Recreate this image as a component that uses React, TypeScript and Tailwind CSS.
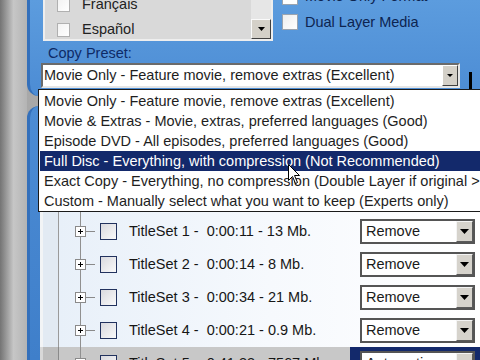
import React from "react";

function Tri({ w = 8, h = 4 }: { w?: number; h?: number }) {
  return (
    <svg width={w} height={h} viewBox={`0 0 ${w} ${h}`}>
      <path d={`M0 0H${w}L${w / 2} ${h}Z`} fill="#000" />
    </svg>
  );
}

function PlusBox() {
  return (
    <svg width="11" height="11" viewBox="0 0 11 11">
      <rect x="0.5" y="0.5" width="10" height="10" fill="#fff" stroke="#8a8a8a" />
      <path d="M3 5.5H8M5.5 3V8" stroke="#000" strokeWidth="1" />
    </svg>
  );
}

function RemoveCombo({ label }: { label: string }) {
  return (
    <div className="w-[115px] h-[25px] bg-white border-2 border-[#555555] flex items-center">
      <span className="flex-1 pl-[4px] text-[14.5px] leading-none text-[#1a1a1a] whitespace-nowrap overflow-hidden">
        {label}
      </span>
      <div className="w-[17px] h-[21px] bg-[#d6d3cc] border border-t-[#f4f4f4] border-l-[#f4f4f4] border-b-[#5a5a5a] border-r-[#5a5a5a] flex items-center justify-center">
        <Tri w={9} h={5} />
      </div>
    </div>
  );
}

function TreeRow({
  text,
  combo,
  selected = false,
}: {
  text: string;
  combo: string;
  selected?: boolean;
}) {
  return (
    <div className="h-[33px] flex shrink-0">
      <div
        className={
          selected
            ? "w-[19px] shrink-0 border-l-[3px] border-l-[#d8d8d8] bg-[#bdbdbd] border-r border-r-[#8a8a8a]"
            : "w-[19px] shrink-0 border-l-[3px] border-l-[#f2f4f6] bg-[#e2eaf3] border-r border-r-[#9a9a9a]"
        }
      />
      <div
        className={
          selected
            ? "flex-1 flex items-center bg-[#c8c8c8]"
            : "flex-1 flex items-center bg-linear-to-r from-[#e8f0f9] via-[#f6f9fd] to-white"
        }
      >
        <div className="ml-[16px] w-[11px] h-full flex items-center justify-center bg-[linear-gradient(to_right,transparent_5px,#909090_5px,#909090_6px,transparent_6px)]">
          <PlusBox />
        </div>
        <div className="w-[9px] h-px bg-[#8a8a8a]" />
        <div className="ml-[5px] w-[17px] h-[17px] border-[1.5px] border-[#22325e] bg-linear-to-br from-[#d9d9de] to-[#fafafa]" />
        <span className="ml-[12px] w-[221px] text-[14.5px] leading-none text-[#161616] whitespace-pre">
          {text}
        </span>
        <div
          className={
            selected
              ? "flex-1 h-full bg-[#13296b] pl-[10px] flex items-center"
              : "flex-1 h-full pl-[10px] flex items-center"
          }
        >
          <RemoveCombo label={combo} />
        </div>
      </div>
    </div>
  );
}

const presets = [
  "Movie Only - Feature movie, remove extras (Excellent)",
  "Movie & Extras - Movie, extras, preferred languages (Good)",
  "Episode DVD - All episodes, preferred languages (Good)",
  "Full Disc - Everything, with compression (Not Recommended)",
  "Exact Copy - Everything, no compression (Double Layer if original > 4.7 GB)",
  "Custom - Manually select what you want to keep (Experts only)",
];

export default function App() {
  return (
    <div className="relative w-[480px] h-[360px] overflow-hidden flex font-['Liberation_Sans',Arial,sans-serif] bg-[#c2c2c2]">
      {/* left desktop strip */}
      <div className="w-[27px] shrink-0 bg-linear-to-r from-[#747474] via-[#c6c6c6] to-[#b4b4b4]" />

      {/* main column */}
      <div className="flex-1 flex flex-col bg-linear-to-r from-[#a8a8a8] to-[#c8c8c8]">
        {/* panel 1 */}
        <div className="h-[96px] shrink-0 rounded-bl-[12px] border-l-[3px] border-l-[#3470bb] bg-linear-to-b from-[#5c9cde] to-[#4c8cd4] flex flex-col">
          <div className="flex h-[41px] shrink-0">
            {/* language list */}
            <div className="ml-[13px] w-[230px] h-[41px] bg-[#d9d9d9] border-l-2 border-r-2 border-b-2 border-[#eeeeee] flex overflow-hidden">
              <div className="flex-1 flex flex-col -mt-[8px]">
                <div className="h-[25px] shrink-0 flex items-center pl-[12px]">
                  <div className="w-[13px] h-[14px] border border-[#b0b0b0] bg-linear-to-br from-[#f2f2f2] to-white" />
                  <span className="ml-[12px] text-[14.5px] leading-none text-[#222]">Français</span>
                </div>
                <div className="h-[25px] shrink-0 flex items-center pl-[12px]">
                  <div className="w-[13px] h-[14px] border border-[#b0b0b0] bg-linear-to-br from-[#f2f2f2] to-white" />
                  <span className="ml-[12px] text-[14.5px] leading-none text-[#222]">Español</span>
                </div>
              </div>
              <div className="w-[20px] shrink-0 bg-[#e6e6e6] flex flex-col justify-end">
                <div className="h-[20px] bg-[#d4d0c8] border border-t-[#fafafa] border-l-[#fafafa] border-b-[#404040] border-r-[#404040] flex items-center justify-center">
                  <Tri w={7} h={4} />
                </div>
              </div>
            </div>
            {/* right options */}
            <div className="ml-[9px] -mt-[17px] flex flex-col">
              <div className="h-[27px] flex items-center">
                <div className="w-[16px] h-[16px] border border-[#9aa4b0] bg-white" />
                <span className="ml-[7px] text-[14.5px] leading-none text-[#0d2450]">Movie Only Format</span>
              </div>
              <div className="h-[24px] flex items-center">
                <div className="w-[16px] h-[16px] border border-[#9aa4b0] bg-linear-to-br from-[#eeeeee] to-white" />
                <span className="ml-[7px] text-[14.5px] leading-none text-[#0d2450]">Dual Layer Media</span>
              </div>
            </div>
          </div>
          <div className="ml-[18px] mt-[4px] h-[16px] flex items-center text-[14.5px] leading-none text-[#0e2a66]">
            Copy Preset:
          </div>
          <div className="ml-[11px] mt-[2px] flex items-start">
            <div className="w-[419px] h-[25px] bg-white border-2 border-t-[#6b6b6b] border-l-[#6b6b6b] border-b-[#e6e6e6] border-r-[#e6e6e6] flex items-center">
              <span className="flex-1 pl-px text-[14.5px] leading-none text-[#1e1e1e] whitespace-nowrap">
                Movie Only - Feature movie, remove extras (Excellent)
              </span>
              <div className="w-[16px] h-[21px] bg-[#d4d0c8] border border-t-white border-l-white border-b-[#404040] border-r-[#404040] flex items-center justify-center">
                <Tri w={6} h={3} />
              </div>
            </div>
            <div className="ml-[9px] mt-[9px] w-[3px] h-[18px] bg-black" />
          </div>
        </div>

        {/* gap */}
        <div className="h-[10px] shrink-0" />

        {/* panel 2 */}
        <div className="flex-1 rounded-tl-[12px] border-l-[3px] border-l-[#3470bb] bg-linear-to-b from-[#4c8cd4] to-[#3f7fca] pl-[10px] flex flex-col overflow-hidden">
          <div className="mt-[105px] flex flex-col">
            <div className="h-[4px] flex shrink-0">
              <div className="w-[19px] shrink-0 border-l-[3px] border-l-[#f2f4f6] bg-[#e2eaf3] border-r border-r-[#9a9a9a]" />
              <div className="flex-1 flex bg-linear-to-r from-[#e8f0f9] via-[#f6f9fd] to-white">
                <div className="ml-[21px] w-px h-full bg-[#909090]" />
              </div>
            </div>
            <TreeRow text="TitleSet 1 -  0:00:11 - 13 Mb." combo="Remove" />
            <TreeRow text="TitleSet 2 -  0:00:14 - 8 Mb." combo="Remove" />
            <TreeRow text="TitleSet 3 -  0:00:34 - 21 Mb." combo="Remove" />
            <TreeRow text="TitleSet 4 -  0:00:21 - 0.9 Mb." combo="Remove" />
            <TreeRow text="TitleSet 5 -  0:41:33 - 7567 Mb." combo="Automatic" selected />
          </div>
        </div>
      </div>

      {/* dropdown list overlay */}
      <div className="absolute left-[38px] top-[89px] w-[450px] h-[123px] bg-white border border-[#1a1a1a] p-px flex flex-col">
        {presets.map((p, i) => (
          <div
            key={i}
            className={
              i === 3
                ? "h-[20px] shrink-0 flex items-center pl-[4px] bg-[#13296b] text-white text-[14.5px] leading-none whitespace-nowrap"
                : "h-[20px] shrink-0 flex items-center pl-[4px] text-[#1e1e1e] text-[14.5px] leading-none whitespace-nowrap"
            }
          >
            {p}
          </div>
        ))}
      </div>

      {/* mouse cursor */}
      <svg className="absolute left-[288px] top-[164px]" width="13" height="21" viewBox="0 0 13 21">
        <path d="M0.5 0.5V16.5L4.5 12.5L7.5 19.5L9.5 18.5L6.5 11.5H11.5Z" fill="#fff" stroke="#000" strokeWidth="1" strokeLinejoin="round" />
      </svg>
    </div>
  );
}
